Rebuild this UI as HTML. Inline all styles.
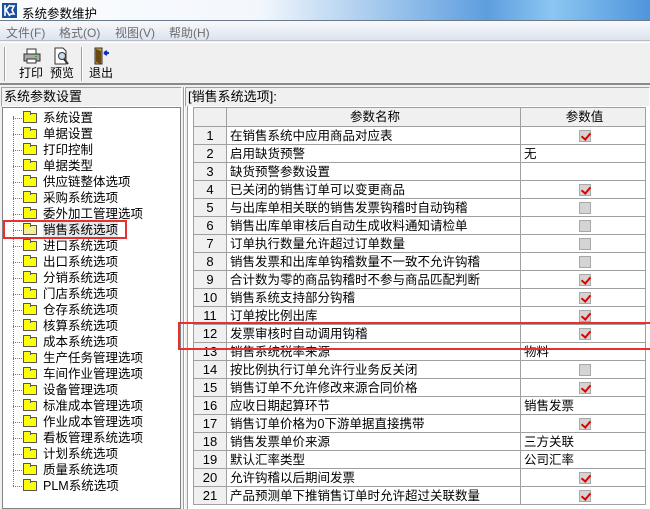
<!DOCTYPE html>
<html><head><meta charset="utf-8"><style>
*{margin:0;padding:0;box-sizing:border-box}
body{width:650px;height:509px;overflow:hidden;background:#f0f0f0;font-family:"Liberation Sans","Noto Sans CJK SC","WenQuanYi Zen Hei",sans-serif;font-size:12px;color:#000;position:relative}
.abs{position:absolute}
#title{left:0;top:0;width:650px;height:21px;background:linear-gradient(90deg,#fbfcfe 0%,#f3f7fc 40%,#9cc4ec 60%,#5d9ede 75%,#8cc6f2 85%,#4f95dc 100%);border-bottom:1px solid #6b7a8a}
#menu{left:0;top:21px;width:650px;height:20px;background:linear-gradient(#f8f9fb,#dde3f0);border-bottom:1px solid #b8bcc4;color:#6d6d6d;font-size:12px}
#menu span{position:absolute;top:3px}
#tb{left:0;top:42px;width:650px;height:43px;border-top:1px solid #fff;border-bottom:2px solid #8a8a8a}
.tbtext{position:absolute;top:21px;font-size:12px}
.hdr{height:20px;border:1px solid #a0a0a0;border-right-color:#fff;border-bottom-color:#fff;line-height:17px;padding-left:2px;font-size:13px}
#tree{left:2px;top:107px;width:179px;height:402px;background:#fff;border:1px solid #828282}
.ti{position:absolute;left:0;height:16px;width:170px}
.ti .h{position:absolute;left:10px;top:8px;width:11px;border-top:1px dotted #777}
.ti .f{position:absolute;left:20px;top:3px;width:14px;height:10px;background:#ffff00;border:1px solid #555}
.ti .f:before{content:"";position:absolute;left:-1px;top:-3px;width:6px;height:3px;background:#ffff00;border:1px solid #555;border-bottom:none}
.ti .t{position:absolute;left:40px;top:0;line-height:16px;font-size:12.5px}
table{position:absolute;left:193px;top:107px;border-collapse:collapse;background:#fff}
td{height:18px;border:1px solid #a0a0a0;font-size:12.5px;padding:0 0 0 3px;white-space:nowrap;overflow:hidden;line-height:16px}
td.n{width:33px;background:#f0f0f0;text-align:center;padding:0;font-size:13px}
td.m{width:294px}
td.v{width:125px}
tr.h td{background:#f0f0f0;text-align:center;height:19px}
.cb{display:block;margin:0 auto;width:12px;height:12px;background:#d4d4d4;border:1px solid #a8a8a8;position:relative}
.cb.c:after{content:"";position:absolute;left:3px;top:0px;width:4px;height:7px;border:solid #e00000;border-width:0 2px 2px 0;transform:rotate(40deg)}
</style></head><body>
<div id="title" class="abs">
<svg class="abs" style="left:2px;top:3px" width="15" height="15"><rect width="15" height="15" fill="#1a4f9c"/><path d="M3 2v11M3 8l5-6M4 7l4 6M8 3h4l-2 4 2 4h-4" stroke="#fff" stroke-width="1.6" fill="none"/></svg>
<span class="abs" style="left:22px;top:3px;font-size:12.5px">系统参数维护</span>
</div>
<div id="menu" class="abs"><span style="left:6px">文件(F)</span><span style="left:59px">格式(O)</span><span style="left:115px">视图(V)</span><span style="left:169px">帮助(H)</span></div>
<div id="tb" class="abs">
<div class="abs" style="left:4px;top:4px;width:2px;height:34px;border-left:1px solid #a0a0a0;border-right:1px solid #fff"></div>
<div class="abs" style="left:81px;top:4px;width:2px;height:34px;border-left:1px solid #a0a0a0;border-right:1px solid #fff"></div>
<svg class="abs" style="left:23px;top:5px" width="18" height="16"><rect x="4" y="1" width="9" height="5" fill="#fff" stroke="#333"/><rect x="1" y="6" width="16" height="7" fill="#aaa" stroke="#333"/><rect x="4" y="11" width="9" height="4" fill="#fff" stroke="#333"/><rect x="12" y="8" width="2" height="1" fill="#0c0"/></svg>
<svg class="abs" style="left:54px;top:4px" width="16" height="18"><path d="M1 1h8l3 3v13H1z" fill="#fff" stroke="#333"/><circle cx="8" cy="9" r="3.5" fill="#cde" stroke="#333"/><path d="M10 12l4 5" stroke="#333" stroke-width="2"/></svg>
<svg class="abs" style="left:94px;top:4px" width="16" height="18"><path d="M1 1h7v16H1z" fill="#c8a040" stroke="#333"/><path d="M2 2l5 2v13l-5-2z" fill="#6a4a10"/><path d="M10 6h5M10 6l3-2M10 6l3 2" stroke="#1030c0" stroke-width="2"/></svg>
<span class="tbtext" style="left:19px">打印</span><span class="tbtext" style="left:50px">预览</span><span class="tbtext" style="left:89px">退出</span>
</div>
<div class="abs hdr" style="left:1px;top:87px;width:181px">系统参数设置</div>
<div class="abs hdr" style="left:185px;top:87px;width:465px">[销售系统选项]:</div>
<div class="abs" style="left:183px;top:87px;width:2px;height:422px;border-left:1px solid #a0a0a0;border-right:1px solid #fff"></div>
<div id="tree" class="abs">
<div class="abs" style="left:10px;top:8px;height:370px;border-left:1px dotted #777"></div>
<div class="ti" style="top:2px"><i class="h"></i><i class="f"></i><span class="t">系统设置</span></div>
<div class="ti" style="top:18px"><i class="h"></i><i class="f"></i><span class="t">单据设置</span></div>
<div class="ti" style="top:34px"><i class="h"></i><i class="f"></i><span class="t">打印控制</span></div>
<div class="ti" style="top:50px"><i class="h"></i><i class="f"></i><span class="t">单据类型</span></div>
<div class="ti" style="top:66px"><i class="h"></i><i class="f"></i><span class="t">供应链整体选项</span></div>
<div class="ti" style="top:82px"><i class="h"></i><i class="f"></i><span class="t">采购系统选项</span></div>
<div class="ti" style="top:98px"><i class="h"></i><i class="f"></i><span class="t">委外加工管理选项</span></div>
<div class="ti" style="top:114px"><i class="h"></i><i class="f" style="background:#f4f090"></i><span class="t" style="background:#e8e8e8">销售系统选项</span></div>
<div class="ti" style="top:130px"><i class="h"></i><i class="f"></i><span class="t">进口系统选项</span></div>
<div class="ti" style="top:146px"><i class="h"></i><i class="f"></i><span class="t">出口系统选项</span></div>
<div class="ti" style="top:162px"><i class="h"></i><i class="f"></i><span class="t">分销系统选项</span></div>
<div class="ti" style="top:178px"><i class="h"></i><i class="f"></i><span class="t">门店系统选项</span></div>
<div class="ti" style="top:194px"><i class="h"></i><i class="f"></i><span class="t">仓存系统选项</span></div>
<div class="ti" style="top:210px"><i class="h"></i><i class="f"></i><span class="t">核算系统选项</span></div>
<div class="ti" style="top:226px"><i class="h"></i><i class="f"></i><span class="t">成本系统选项</span></div>
<div class="ti" style="top:242px"><i class="h"></i><i class="f"></i><span class="t">生产任务管理选项</span></div>
<div class="ti" style="top:258px"><i class="h"></i><i class="f"></i><span class="t">车间作业管理选项</span></div>
<div class="ti" style="top:274px"><i class="h"></i><i class="f"></i><span class="t">设备管理选项</span></div>
<div class="ti" style="top:290px"><i class="h"></i><i class="f"></i><span class="t">标准成本管理选项</span></div>
<div class="ti" style="top:306px"><i class="h"></i><i class="f"></i><span class="t">作业成本管理选项</span></div>
<div class="ti" style="top:322px"><i class="h"></i><i class="f"></i><span class="t">看板管理系统选项</span></div>
<div class="ti" style="top:338px"><i class="h"></i><i class="f"></i><span class="t">计划系统选项</span></div>
<div class="ti" style="top:354px"><i class="h"></i><i class="f"></i><span class="t">质量系统选项</span></div>
<div class="ti" style="top:370px"><i class="h"></i><i class="f"></i><span class="t">PLM系统选项</span></div>
</div>
<div class="abs" style="left:3px;top:220px;width:124px;height:19px;border:2px solid #e83030"></div>
<div class="abs" style="left:187px;top:106px;width:463px;height:403px;background:#fff;border-left:1px solid #a0a0a0"></div>
<table>
<tr class="h"><td class="n"></td><td class="m" style="text-align:center">参数名称</td><td class="v" style="text-align:center">参数值</td></tr>
<tr><td class="n">1</td><td>在销售系统中应用商品对应表</td><td><i class="cb c"></i></td></tr>
<tr><td class="n">2</td><td>启用缺货预警</td><td>无</td></tr>
<tr><td class="n">3</td><td>缺货预警参数设置</td><td></td></tr>
<tr><td class="n">4</td><td>已关闭的销售订单可以变更商品</td><td><i class="cb c"></i></td></tr>
<tr><td class="n">5</td><td>与出库单相关联的销售发票钩稽时自动钩稽</td><td><i class="cb"></i></td></tr>
<tr><td class="n">6</td><td>销售出库单审核后自动生成收料通知请检单</td><td><i class="cb"></i></td></tr>
<tr><td class="n">7</td><td>订单执行数量允许超过订单数量</td><td><i class="cb"></i></td></tr>
<tr><td class="n">8</td><td>销售发票和出库单钩稽数量不一致不允许钩稽</td><td><i class="cb"></i></td></tr>
<tr><td class="n">9</td><td>合计数为零的商品钩稽时不参与商品匹配判断</td><td><i class="cb c"></i></td></tr>
<tr><td class="n">10</td><td>销售系统支持部分钩稽</td><td><i class="cb c"></i></td></tr>
<tr><td class="n">11</td><td>订单按比例出库</td><td><i class="cb c"></i></td></tr>
<tr><td class="n">12</td><td>发票审核时自动调用钩稽</td><td><i class="cb c"></i></td></tr>
<tr><td class="n">13</td><td>销售系统税率来源</td><td>物料</td></tr>
<tr><td class="n">14</td><td>按比例执行订单允许行业务反关闭</td><td><i class="cb"></i></td></tr>
<tr><td class="n">15</td><td>销售订单不允许修改来源合同价格</td><td><i class="cb c"></i></td></tr>
<tr><td class="n">16</td><td>应收日期起算环节</td><td>销售发票</td></tr>
<tr><td class="n">17</td><td>销售订单价格为0下游单据直接携带</td><td><i class="cb c"></i></td></tr>
<tr><td class="n">18</td><td>销售发票单价来源</td><td>三方关联</td></tr>
<tr><td class="n">19</td><td>默认汇率类型</td><td>公司汇率</td></tr>
<tr><td class="n">20</td><td>允许钩稽以后期间发票</td><td><i class="cb c"></i></td></tr>
<tr><td class="n">21</td><td>产品预测单下推销售订单时允许超过关联数量</td><td><i class="cb c"></i></td></tr>
</table>
<div class="abs" style="left:178px;top:322px;width:472px;height:28px;border:2px solid #e83030;border-right:none"></div>
</body></html>
